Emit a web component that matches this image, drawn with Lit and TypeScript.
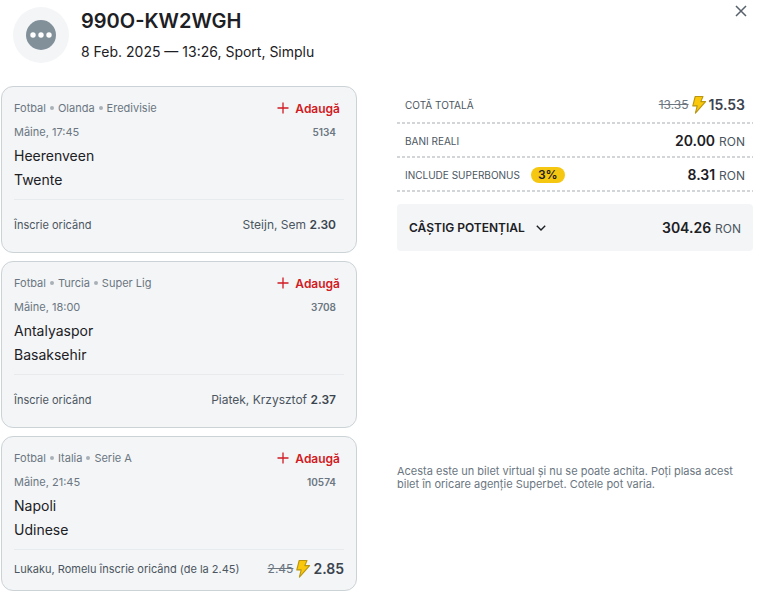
import { LitElement, html, css, svg, nothing } from "lit";
import { customElement, property } from "lit/decorators.js";

interface Selection {
  path: string[];
  time: string;
  code: string;
  home: string;
  away: string;
  market: string;
  pick?: string;
  oldOdds?: string;
  odds: string;
}

const selections: Selection[] = [
  { path: ["Fotbal", "Olanda", "Eredivisie"], time: "Mâine, 17:45", code: "5134", home: "Heerenveen", away: "Twente", market: "Înscrie oricând", pick: "Steijn, Sem", odds: "2.30" },
  { path: ["Fotbal", "Turcia", "Super Lig"], time: "Mâine, 18:00", code: "3708", home: "Antalyaspor", away: "Basaksehir", market: "Înscrie oricând", pick: "Piatek, Krzysztof", odds: "2.37" },
  { path: ["Fotbal", "Italia", "Serie A"], time: "Mâine, 21:45", code: "10574", home: "Napoli", away: "Udinese", market: "Lukaku, Romelu înscrie oricând (de la 2.45)", oldOdds: "2.45", odds: "2.85" },
];

const base = css`
  * { box-sizing: border-box; }
  button { border: 0; padding: 0; background: none; font: inherit; color: inherit; cursor: pointer; }
  svg { display: block; flex: none; }
`;

@customElement("boosted-odds")
export class BoostedOdds extends LitElement {
  @property() was = "";
  @property() now = "";

  static styles = [base, css`
    :host { display: flex; align-items: center; gap: 2px; white-space: nowrap; }
    .was { font-size: 12px; color: #6b7681; text-decoration: line-through; }
    .now { font-size: 14px; font-weight: 600; color: #3b444e; }
  `];

  render() {
    return html`
      <s class="was">${this.was}</s>
      <svg width="16" height="20" viewBox="0 0 16 20" aria-hidden="true">
        ${svg`<path d="M4.2 1.5H12L9.8 6.6H14.6L4.4 18.2L6.2 10.9H1.8Z" fill="#fbc70a" stroke="#b8960f" stroke-width="1.1" stroke-linejoin="round"/>`}
      </svg>
      <span class="now">${this.now}</span>
    `;
  }
}

@customElement("bet-card")
export class BetCard extends LitElement {
  @property({ attribute: false }) item!: Selection;

  static styles = [base, css`
    :host { display: block; }
    .card { border: 1px solid #ccd3d7; border-radius: 12px; background: #f3f5f7; padding: 9px 12px 3px; }
    .row { display: flex; align-items: center; justify-content: space-between; min-height: 24px; }
    .path { display: flex; align-items: center; gap: 4px; font-size: 11px; color: #6b7681; }
    .dot { width: 4px; height: 4px; border-radius: 50%; background: #a9b1b7; }
    .time { font-size: 11px; color: #6b7681; }
    .code { font-size: 10px; font-weight: 600; color: #6b7681; padding-right: 8px; }
    .add { display: flex; align-items: center; gap: 6px; margin-right: 4px; font-size: 12px; font-weight: 600; color: #d11a22; }
    .team { font-size: 14px; line-height: 24px; color: #1c2024; }
    .market { margin-top: 7px; border-top: 1px solid #e8ebee; min-height: 50px; font-size: 11px; color: #4c5660; }
    .market.boosted { min-height: 38px; }
    .pick { font-size: 12px; padding-right: 8px; }
    .pick b { font-weight: 600; color: #3b444e; }
  `];

  render() {
    const i = this.item;
    return html`
      <article class="card">
        <div class="row">
          <div class="path">
            ${i.path.map((p, n) => html`${n ? html`<span class="dot"></span>` : nothing}<span>${p}</span>`)}
          </div>
          <button class="add" type="button">
            <svg width="12" height="12" viewBox="0 0 12 12" fill="none" stroke="currentColor" stroke-width="1.3" aria-hidden="true"><path d="M6 .5V11.5M.5 6H11.5" /></svg>
            Adaugă
          </button>
        </div>
        <div class="row"><span class="time">${i.time}</span><span class="code">${i.code}</span></div>
        <div class="team">${i.home}</div>
        <div class="team">${i.away}</div>
        <div class="row market ${i.oldOdds ? "boosted" : ""}">
          <span>${i.market}</span>
          ${i.oldOdds
            ? html`<boosted-odds .was=${i.oldOdds} .now=${i.odds}></boosted-odds>`
            : html`<span class="pick">${i.pick} <b>${i.odds}</b></span>`}
        </div>
      </article>
    `;
  }
}

@customElement("app-root")
export class AppRoot extends LitElement {
  static styles = [base, css`
    :host { display: block; background: #fff; color: #1c2024; font-family: Inter, "Liberation Sans", sans-serif; padding: 7px 19px 2px 1px; }
    header { display: flex; align-items: flex-start; gap: 12px; padding-left: 12px; }
    .avatar { flex: none; display: grid; place-items: center; width: 56px; height: 56px; border-radius: 50%; background: #f3f5f7; }
    .heading { flex: 1; }
    h1 { margin: 0; font-size: 20px; line-height: 28px; font-weight: 600; }
    .sub { margin: 0; padding-top: 6px; font-size: 14px; line-height: 22px; }
    .close { margin: -2px 6px 0 0; color: #56616b; }
    main { display: grid; grid-template-columns: 1fr 1fr; gap: 40px; margin-top: 23px; }
    .cards { display: grid; gap: 8px; align-content: start; }
    .summary { display: flex; flex-direction: column; }
    dl { margin: 0; }
    .line { display: flex; align-items: center; justify-content: space-between; height: 34px; padding: 1px 8px 2px; background: repeating-linear-gradient(90deg, #d3d6d9 0 3px, transparent 3px 5px) bottom / 100% 2px no-repeat; }
    .line.first { height: 38px; }
    dt { display: flex; align-items: center; gap: 11px; font-size: 10px; color: #4c5660; }
    dd { margin: 0; }
    .badge { padding: 0 7px; border-radius: 8px; background: #f5c711; font-size: 12px; line-height: 16px; font-weight: 600; color: #1c2024; }
    .amount { font-size: 14px; color: #1c2024; }
    .amount b { font-weight: 600; }
    .amount span { font-size: 12px; color: #4c5660; }
    .total { display: flex; align-items: center; justify-content: space-between; width: 100%; height: 47px; margin-top: 12px; padding: 0 12px; border-radius: 4px; background: #f3f5f7; }
    .potential { display: flex; align-items: center; gap: 11px; font-size: 12px; font-weight: 600; }
    .note { margin: auto 0 100px; font-size: 11px; line-height: 13px; color: #6b7681; }
  `];

  render() {
    return html`
      <header>
        <div class="avatar">
          <svg width="30" height="30" viewBox="0 0 30 30" aria-hidden="true">
            <circle cx="15" cy="15" r="15" fill="#82909a" />
            <g fill="#fff"><circle cx="7" cy="15" r="2.7" /><circle cx="15" cy="15" r="2.7" /><circle cx="23" cy="15" r="2.7" /></g>
          </svg>
        </div>
        <div class="heading">
          <h1>990O-KW2WGH</h1>
          <p class="sub">8 Feb. 2025 — 13:26, Sport, Simplu</p>
        </div>
        <button class="close" type="button" aria-label="Închide">
          <svg width="12" height="12" viewBox="0 0 12 12" fill="none" stroke="currentColor" stroke-width="1.5"><path d="M1 1L11 11M11 1L1 11" /></svg>
        </button>
      </header>
      <main>
        <section class="cards">${selections.map((s) => html`<bet-card .item=${s}></bet-card>`)}</section>
        <section class="summary">
          <dl>
            <div class="line first"><dt>COTĂ TOTALĂ</dt><dd><boosted-odds was="13.35" now="15.53"></boosted-odds></dd></div>
            <div class="line"><dt>BANI REALI</dt><dd class="amount"><b>20.00</b> <span>RON</span></dd></div>
            <div class="line"><dt>INCLUDE SUPERBONUS <span class="badge">3%</span></dt><dd class="amount"><b>8.31</b> <span>RON</span></dd></div>
          </dl>
          <button class="total" type="button" aria-expanded="false">
            <span class="potential">CÂȘTIG POTENȚIAL
              <svg width="10" height="6" viewBox="0 0 10 6" fill="none" stroke="currentColor" stroke-width="1.4" aria-hidden="true"><path d="M.8 .8L5 5L9.2 .8" /></svg>
            </span>
            <span class="amount"><b>304.26</b> <span>RON</span></span>
          </button>
          <p class="note">Acesta este un bilet virtual și nu se poate achita. Poți plasa acest bilet în oricare agenție Superbet. Cotele pot varia.</p>
        </section>
      </main>
    `;
  }
}
